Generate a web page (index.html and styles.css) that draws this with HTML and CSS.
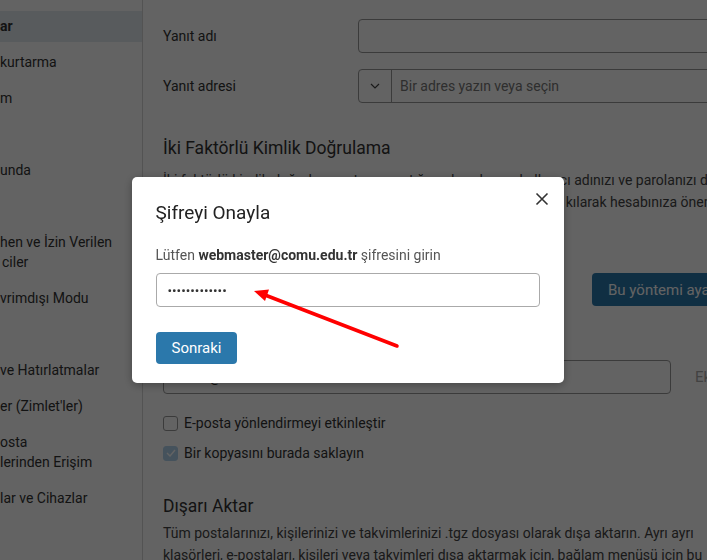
FILE: index.html
```html
<!DOCTYPE html>
<html lang="tr">
<head>
    <meta charset="UTF-8">
    <meta name="viewport" content="width=device-width, initial-scale=1.0">
    <title>Ayarlar - Hesaplar</title>
    <link rel="stylesheet" href="styles.css">
</head>
<body>

    <div class="layout">
        <!-- Settings navigation -->
        <nav class="sidebar">
            <div class="nav-item active">ar</div>
            <div class="nav-item">kurtarma</div>
            <div class="nav-item">m</div>
            <div class="nav-item"></div>
            <div class="nav-item">unda</div>
            <div class="nav-item"></div>
            <div class="nav-item">hen ve İzin Verilen<br><span class="wrap">ciler</span></div>
            <div class="nav-item">vrimdışı Modu</div>
            <div class="nav-item"></div>
            <div class="nav-item">ve Hatırlatmalar</div>
            <div class="nav-item">er (Zimlet'ler)</div>
            <div class="nav-item">osta<br>lerinden Erişim</div>
            <div class="nav-item">lar ve Cihazlar</div>
        </nav>

        <!-- Account settings -->
        <main class="content">
            <div class="form-row">
                <label class="form-label">Yanıt adı</label>
                <input class="text-input" type="text">
            </div>
            <div class="form-row">
                <label class="form-label">Yanıt adresi</label>
                <div class="combo">
                    <span class="combo-toggle">
                        <svg width="10" height="6" viewBox="0 0 10 6"><path d="M1 1l4 4 4-4" fill="none" stroke="#444" stroke-width="1.2"/></svg>
                    </span>
                    <input class="combo-input" type="text" placeholder="Bir adres yazın veya seçin">
                </div>
            </div>

            <h2 class="section-title">İki Faktörlü Kimlik Doğrulama</h2>
            <p class="section-text">
                <span class="line">İki faktörlü kimlik doğrulama, oturum açtığınızda yalnızca kullanıcı adınızı ve parolanızı değil,</span>
                <span class="line">telefonunuza gönderilen bir doğrulama kodunu da ayrıca zorunlu kılarak hesabınıza önemli bir güvenlik katmanı ekler.</span>
            </p>
            <div class="method-row">
                <span class="method-name">Kimlik doğrulayıcı uygulaması</span>
                <button class="btn-dark">Bu yöntemi ayarla</button>
            </div>

            <h2 class="section-title forward-title">E-posta Yönlendirme</h2>
            <div class="forward-row">
                <input class="text-input forward-input" type="text" value="ornek@comu.edu.tr">
                <button class="btn-light">Ekle</button>
            </div>
            <label class="check-row"><span class="check"></span>E-posta yönlendirmeyi etkinleştir</label>
            <label class="check-row"><span class="check checked">
                <svg width="10" height="8" viewBox="0 0 10 8"><path d="M1 4l3 3 5-6" fill="none" stroke="#fff" stroke-width="1.4"/></svg>
            </span>Bir kopyasını burada saklayın</label>

            <h2 class="section-title export-title">Dışarı Aktar</h2>
            <p class="section-text export-text">Tüm postalarınızı, kişilerinizi ve takvimlerinizi .tgz dosyası olarak dışa aktarın. Ayrı ayrı klasörleri, e-postaları, kişileri veya takvimleri dışa aktarmak için, bağlam menüsü için bu seçeneği kullanın.</p>
        </main>
    </div>

    <!-- Password confirmation dialog -->
    <div class="overlay">
        <div class="modal">
            <button class="modal-close" aria-label="Kapat">
                <svg width="14" height="14" viewBox="0 0 14 14"><path d="M1.5 1.5l11 11M12.5 1.5l-11 11" stroke="#333" stroke-width="1.6"/></svg>
            </button>
            <h3 class="modal-title">Şifreyi Onayla</h3>
            <p class="modal-text">Lütfen <b>webmaster@comu.edu.tr</b> şifresini girin</p>
            <input class="modal-input" type="password" value="abcdefghijklm">
            <button class="btn-primary">Sonraki</button>
        </div>
    </div>

    <!-- Pointer arrow -->
    <svg class="pointer" width="707" height="560" viewBox="0 0 707 560">
        <line x1="397" y1="346" x2="265" y2="295" stroke="#ff0000" stroke-width="3.5" stroke-linecap="round"/>
        <polygon points="254,291 269,289.5 265,301" fill="#ff0000"/>
    </svg>

</body>
</html>
```

FILE: styles.css
```css
/* Global Styles */
body {
    font-family: Roboto, "Liberation Sans", sans-serif;
    margin: 0;
    padding: 0;
    background-color: #fff;
    color: #333;
    font-size: 14px;
    overflow: hidden;
}

.layout {
    display: flex;
    height: 560px;
}

/* Sidebar */
.sidebar {
    width: 142px;
    flex-shrink: 0;
    border-right: 1px solid #d6d6d6;
    padding-top: 8px;
    background-color: #fff;
    color: #333;
}

.nav-item {
    padding: 8px 0;
    line-height: 20px;
    min-height: 20px;
    white-space: nowrap;
}

.nav-item.active {
    background-color: #e2e9f0;
    font-weight: bold;
    padding: 5px 0 6px;
    margin: 3px 0 2px;
}

.nav-item .wrap {
    padding-left: 2px;
}

/* Content */
.content {
    padding: 19px 0 0 20px;
    width: 620px;
    flex-shrink: 0;
}

.form-row {
    display: flex;
    align-items: center;
    margin-bottom: 16px;
}

.form-label {
    width: 195px;
    flex-shrink: 0;
    color: #333;
}

.text-input {
    width: 380px;
    height: 34px;
    box-sizing: border-box;
    border: 1px solid #999;
    border-radius: 4px;
    padding: 0 10px;
    font-family: inherit;
    font-size: 14px;
    color: #333;
    background: #fff;
}

.combo {
    display: flex;
    width: 380px;
    height: 34px;
    box-sizing: border-box;
    border: 1px solid #999;
    border-radius: 4px;
}

.combo-toggle {
    width: 32px;
    display: flex;
    align-items: center;
    justify-content: center;
    border-right: 1px solid #999;
}

.combo-input {
    flex: 1;
    border: none;
    padding: 0 8px;
    font-family: inherit;
    font-size: 14px;
    background: transparent;
}

.combo-input::placeholder {
    color: #777;
}

.section-title {
    font-size: 17.5px;
    font-weight: normal;
    line-height: 24px;
    margin: 33px 0 9px;
    color: #333;
}

.section-text {
    margin: 0;
    line-height: 22px;
    color: #444;
}

.section-text .line {
    display: block;
    white-space: nowrap;
}

.method-row {
    display: flex;
    align-items: center;
    margin-top: 60px;
}

.method-name {
    width: 429px;
}

.btn-dark {
    background-color: #2b79ad;
    color: #fff;
    border: none;
    border-radius: 4px;
    height: 33px;
    padding: 0 16px;
    font-family: inherit;
    font-size: 15px;
    white-space: nowrap;
}

.forward-title {
    margin: 12px 0 18px;
}

.forward-row {
    display: flex;
    align-items: center;
}

.forward-input {
    width: 508px;
}

.btn-light {
    background: none;
    color: #aaa;
    border: none;
    height: 33px;
    padding: 0 16px 0 24px;
    font-family: inherit;
    font-size: 15px;
}

.check-row {
    display: flex;
    align-items: center;
    gap: 6px;
    line-height: 20px;
    margin-top: 10px;
    color: #333;
}

.forward-row + .check-row {
    margin-top: 19px;
}

.check {
    width: 13px;
    height: 13px;
    border: 1px solid #999;
    border-radius: 3px;
    display: flex;
    align-items: center;
    justify-content: center;
    background: #fff;
}

.check.checked {
    background-color: #b3d4ee;
    border-color: #b3d4ee;
}

.export-title {
    margin: 31px 0 4px;
}

.export-text {
    width: 540px;
}

/* Dialog */
.overlay {
    position: fixed;
    inset: 0;
    background-color: rgba(0, 0, 0, 0.61);
    display: flex;
    align-items: center;
    justify-content: center;
    padding-right: 12px;
}

.modal {
    position: relative;
    width: 432px;
    box-sizing: border-box;
    padding: 24px 24px 19px;
    background-color: #fff;
    border-radius: 5px;
    box-shadow: 0 2px 10px rgba(0, 0, 0, 0.3);
}

.modal-close {
    position: absolute;
    top: 15px;
    right: 15px;
    width: 14px;
    height: 14px;
    padding: 0;
    border: none;
    background: none;
    box-sizing: content-box;
}

.modal-title {
    margin: 0;
    font-size: 19px;
    font-weight: normal;
    line-height: 24px;
    color: #222;
}

.modal-text {
    margin: 20px 0 8px;
    line-height: 20px;
    color: #555;
}

.modal-text b {
    color: #333;
}

.modal-input {
    display: block;
    width: 100%;
    height: 34px;
    box-sizing: border-box;
    border: 1px solid #aaa;
    border-radius: 4px;
    padding: 0 11px;
    font-family: inherit;
    font-size: 13.5px;
    color: #333;
}

.btn-primary {
    margin-top: 25px;
    background-color: #2b78ab;
    color: #fff;
    border: none;
    border-radius: 4px;
    height: 32px;
    padding: 0 16px;
    font-family: inherit;
    font-size: 15px;
}

/* Arrow pointing at the field */
.pointer {
    position: fixed;
    top: 0;
    left: 0;
    pointer-events: none;
}
```
